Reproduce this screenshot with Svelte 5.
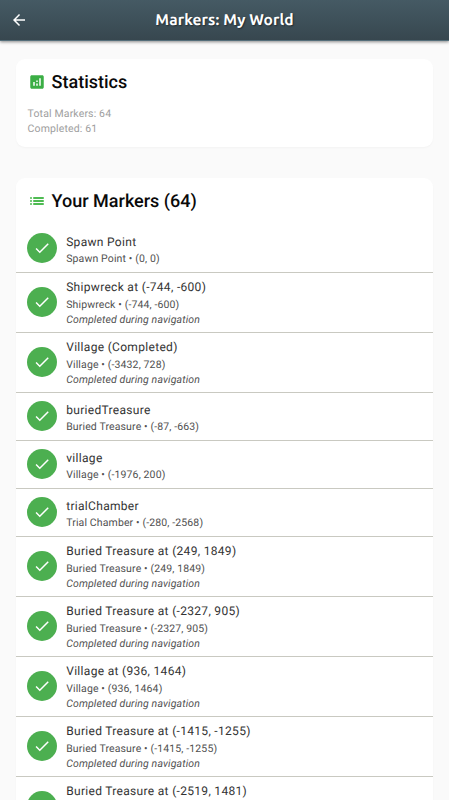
<script>
	const completed = 61;
	const total = 64;
	const note = "Completed during navigation";

	const markers = [
		{ name: "Spawn Point", type: "Spawn Point", pos: "(0, 0)" },
		{ name: "Shipwreck at (-744, -600)", type: "Shipwreck", pos: "(-744, -600)", note },
		{ name: "Village (Completed)", type: "Village", pos: "(-3432, 728)", note },
		{ name: "buriedTreasure", type: "Buried Treasure", pos: "(-87, -663)" },
		{ name: "village", type: "Village", pos: "(-1976, 200)" },
		{ name: "trialChamber", type: "Trial Chamber", pos: "(-280, -2568)" },
		{ name: "Buried Treasure at (249, 1849)", type: "Buried Treasure", pos: "(249, 1849)", note },
		{ name: "Buried Treasure at (-2327, 905)", type: "Buried Treasure", pos: "(-2327, 905)", note },
		{ name: "Village at (936, 1464)", type: "Village", pos: "(936, 1464)", note },
		{ name: "Buried Treasure at (-1415, -1255)", type: "Buried Treasure", pos: "(-1415, -1255)", note },
		{ name: "Buried Treasure at (-2519, 1481)" },
	];
</script>

<div class="screen">
	<header class="app-bar">
		<button class="back" aria-label="Back">
			<svg viewBox="0 0 24 24"><path d="M20 11H7.83l5.59-5.59L12 4l-8 8 8 8 1.41-1.41L7.83 13H20v-2z" /></svg>
		</button>
		<h1>Markers: My World</h1>
	</header>

	<main>
		<section class="card stats">
			<h2>
				<svg viewBox="0 0 24 24"><path d="M19 3H5c-1.1 0-2 .9-2 2v14c0 1.1.9 2 2 2h14c1.1 0 2-.9 2-2V5c0-1.1-.9-2-2-2zM9 17H7v-5h2v5zm4 0h-2v-3h2v3zm0-5h-2v-2h2v2zm4 5h-2V7h2v10z" /></svg>
				<span>Statistics</span>
			</h2>
			<p>Total Markers: {total}</p>
			<p>Completed: {completed}</p>
		</section>

		<section class="card list">
			<h2>
				<svg class="list-icon" viewBox="0 0 24 24"><path d="M3 13h2v-2H3v2zm0 4h2v-2H3v2zm0-8h2V7H3v2zm4 4h14v-2H7v2zm0 4h14v-2H7v2zM7 7v2h14V7H7z" /></svg>
				<span>Your Markers ({total})</span>
			</h2>
			<ul>
				{#each markers as m}
					<li class:tall={m.note}>
						<span class="avatar">
							<svg viewBox="0 0 24 24"><path d="M9 16.17L4.83 12l-1.42 1.41L9 19 21 7l-1.41-1.41z" /></svg>
						</span>
						<div class="text">
							<div class="name">{m.name}</div>
							{#if m.type}<div class="sub">{m.type} • {m.pos}</div>{/if}
							{#if m.note}<div class="sub note">{m.note}</div>{/if}
						</div>
					</li>
				{/each}
			</ul>
		</section>
	</main>
</div>

<style>
	:global(body) {
		background: #fafafa;
		overflow: hidden;
	}
	.screen {
		height: 800px;
		overflow: hidden;
		font-family: Roboto, sans-serif;
		text-rendering: geometricPrecision;
	}
	.app-bar {
		position: relative;
		display: grid;
		grid-template-columns: 37px 1fr 37px;
		align-items: center;
		box-sizing: border-box;
		height: 41px;
		background: linear-gradient(#455a64, #37474f);
		border-bottom: 1px solid #546e7a;
		box-shadow: 0 1px 3px rgba(0, 0, 0, 0.45);
	}
	.back {
		display: flex;
		justify-content: center;
		padding: 0 0 1px;
		border: 0;
		background: none;
	}
	.back svg {
		width: 18px;
		height: 18px;
		fill: #fff;
	}
	h1 {
		margin: 0;
		text-align: center;
		color: #fff;
		font: 700 15.5px/20px Ubuntu, "Noto Sans", sans-serif;
		letter-spacing: 0.12px;
		text-shadow: 1px 1px 1.5px rgba(0, 0, 0, 0.45);
	}
	main {
		display: flex;
		flex-direction: column;
		gap: 31px;
		padding: 18px 16px 0 15.6px;
	}
	.card {
		background: #fff;
		border-radius: 9px;
		box-shadow: 0 1px 2px rgba(0, 0, 0, 0.03);
	}
	.stats {
		box-sizing: border-box;
		height: 88px;
		padding: 12px;
	}
	h2 {
		display: flex;
		align-items: center;
		gap: 6px;
		height: 22px;
		margin: 0;
		color: #0a0a0a;
		font-size: 18px;
		font-weight: 500;
	}
	h2 svg {
		width: 18px;
		height: 18px;
		fill: #3bae45;
	}
	h2 .list-icon {
		fill: #14a51a;
	}
	.stats p {
		margin: 0;
		color: #9e9e9e;
		font-size: 10.5px;
		line-height: 15px;
		letter-spacing: 0.14px;
	}
	.stats h2 {
		margin: 0 0 13px;
	}
	.list h2 {
		padding: 12px 12px 13px;
	}
	ul {
		margin: 0;
		padding: 0;
		list-style: none;
	}
	li {
		display: flex;
		align-items: center;
		gap: 9px;
		box-sizing: border-box;
		height: 48px;
		padding: 1px 11.6px 0;
		border-bottom: 1px solid #c9c9c1;
	}
	li.tall {
		height: 60px;
		padding-top: 0;
		padding-bottom: 0.4px;
	}
	li:last-child {
		align-items: flex-start;
		padding-top: 5px;
	}
	.avatar {
		display: flex;
		align-items: center;
		justify-content: center;
		width: 30px;
		height: 30px;
		margin-bottom: 1.5px;
		border-radius: 50%;
		background: #4caf50;
	}
	.tall .avatar {
		margin-bottom: 0;
	}
	li:last-child .avatar {
		margin-top: 9px;
	}
	.avatar svg {
		width: 18px;
		height: 18px;
		fill: #fff;
	}
	.name {
		color: #333;
		font-size: 12px;
		line-height: 18px;
		letter-spacing: 0.31px;
	}
	.tall .name {
		margin-bottom: 0.6px;
	}
	.sub {
		color: #505050;
		font-size: 10.5px;
		line-height: 15px;
		letter-spacing: 0.13px;
	}
	.note {
		font-style: italic;
	}
</style>
